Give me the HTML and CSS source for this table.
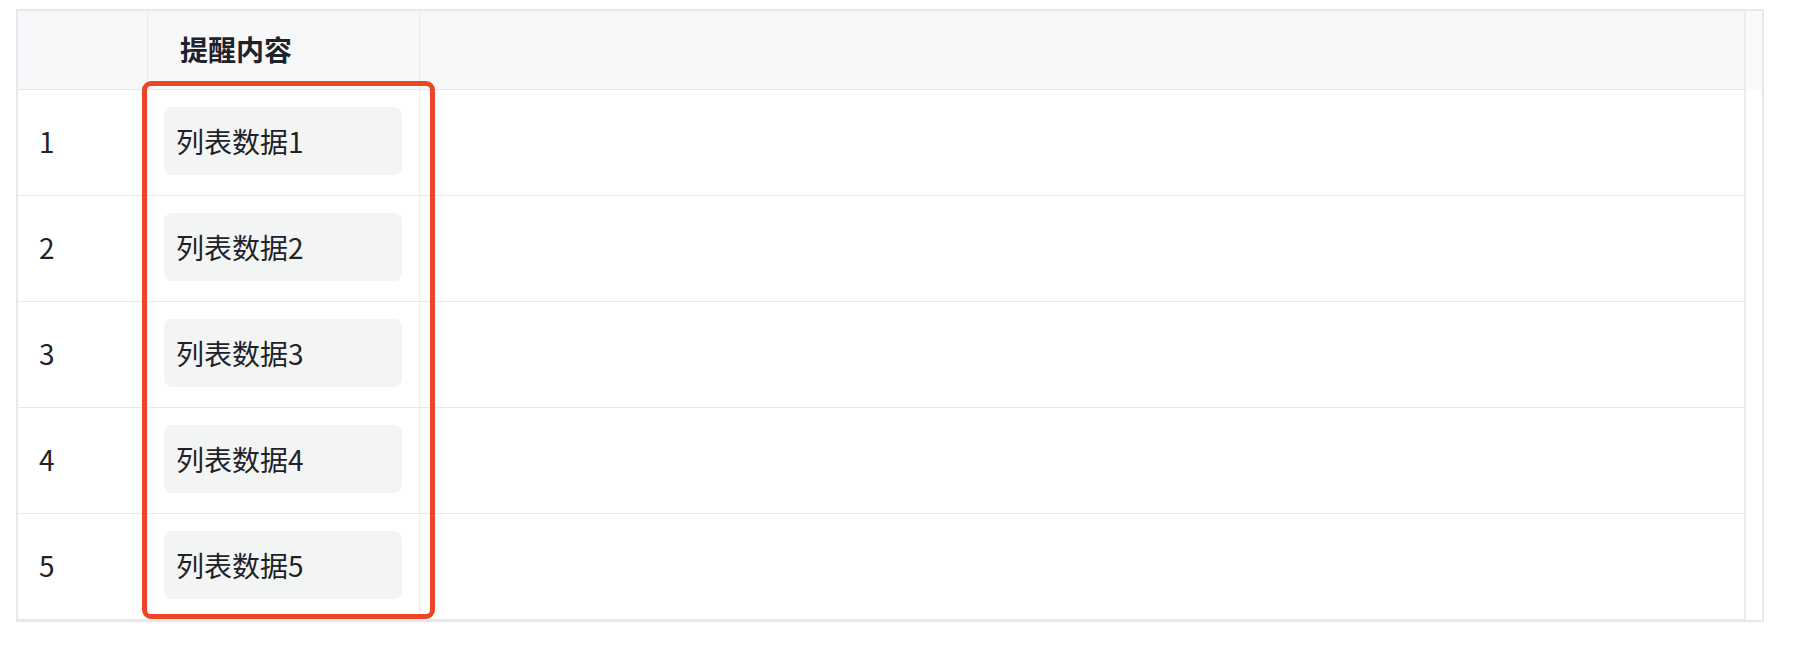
FILE: index.html
```html
<!DOCTYPE html>
<html lang="zh-CN">
<head>
<meta charset="utf-8">
<title>提醒内容</title>
<link rel="stylesheet" href="styles.css">
</head>
<body>
<div class="wrap">
  <div class="table">
    <div class="grid">
      <div class="th th-index"></div>
      <div class="th th-content">提醒内容</div>
      <div class="th th-rest"></div>

      <div class="td td-index">1</div>
      <div class="td td-content"><div class="chip">列表数据1</div></div>
      <div class="td td-rest"></div>

      <div class="td td-index">2</div>
      <div class="td td-content"><div class="chip">列表数据2</div></div>
      <div class="td td-rest"></div>

      <div class="td td-index">3</div>
      <div class="td td-content"><div class="chip">列表数据3</div></div>
      <div class="td td-rest"></div>

      <div class="td td-index">4</div>
      <div class="td td-content"><div class="chip">列表数据4</div></div>
      <div class="td td-rest"></div>

      <div class="td td-index">5</div>
      <div class="td td-content"><div class="chip">列表数据5</div></div>
      <div class="td td-rest"></div>
    </div>
    <div class="gutter">
      <div class="gutter-head"></div>
    </div>
  </div>
  <div class="highlight"></div>
</div>
</body>
</html>
```

FILE: styles.css
```css
html, body {
  margin: 0;
  padding: 0;
  background: #ffffff;
}

body {
  font-family: "Noto Sans CJK SC", "Noto Sans", sans-serif;
  color: #1f2329;
}

.wrap {
  position: relative;
  margin: 9px 0 0 16px;
  width: 1748px;
}

.table {
  display: flex;
  border: 2px solid #e6e8ec;
  box-sizing: border-box;
  width: 1748px;
}

.grid {
  display: grid;
  grid-template-columns: 130px 272px 1324px;
  grid-template-rows: 79px repeat(5, 106px);
  border-right: 2px solid #ebecef;
}

.th {
  background: #f7f8fa;
  border-bottom: 1px solid #e6e8ec;
  border-right: 1px solid #ebecef;
  display: flex;
  align-items: center;
  font-size: 28px;
  font-weight: 700;
  line-height: 1;
  padding-bottom: 2px;
}

.th-rest {
  border-right: none;
}

.th-content {
  padding-left: 32px;
}

.td {
  border-bottom: 1px solid #e6e8ec;
  border-right: 1px solid #ebecef;
  display: flex;
  align-items: center;
  font-size: 28px;
  line-height: 1;
  padding-bottom: 4px;
}

.td-rest {
  border-right: none;
}

.td-index {
  padding-left: 21px;
}

.td-content {
  padding-left: 16px;
}

.chip {
  width: 238px;
  height: 68px;
  box-sizing: border-box;
  background: #f3f4f4;
  border-radius: 8px;
  display: flex;
  align-items: center;
  padding-left: 12px;
  font-size: 28px;
  color: #1f2329;
}

.gutter {
  width: 16px;
  display: flex;
  flex-direction: column;
}

.gutter-head {
  height: 79px;
  background: #fafafa;
}

.highlight {
  position: absolute;
  left: 126px;
  top: 72px;
  width: 293px;
  height: 538px;
  box-sizing: border-box;
  border: 5px solid #ee4527;
  border-radius: 9px;
  pointer-events: none;
}
```
